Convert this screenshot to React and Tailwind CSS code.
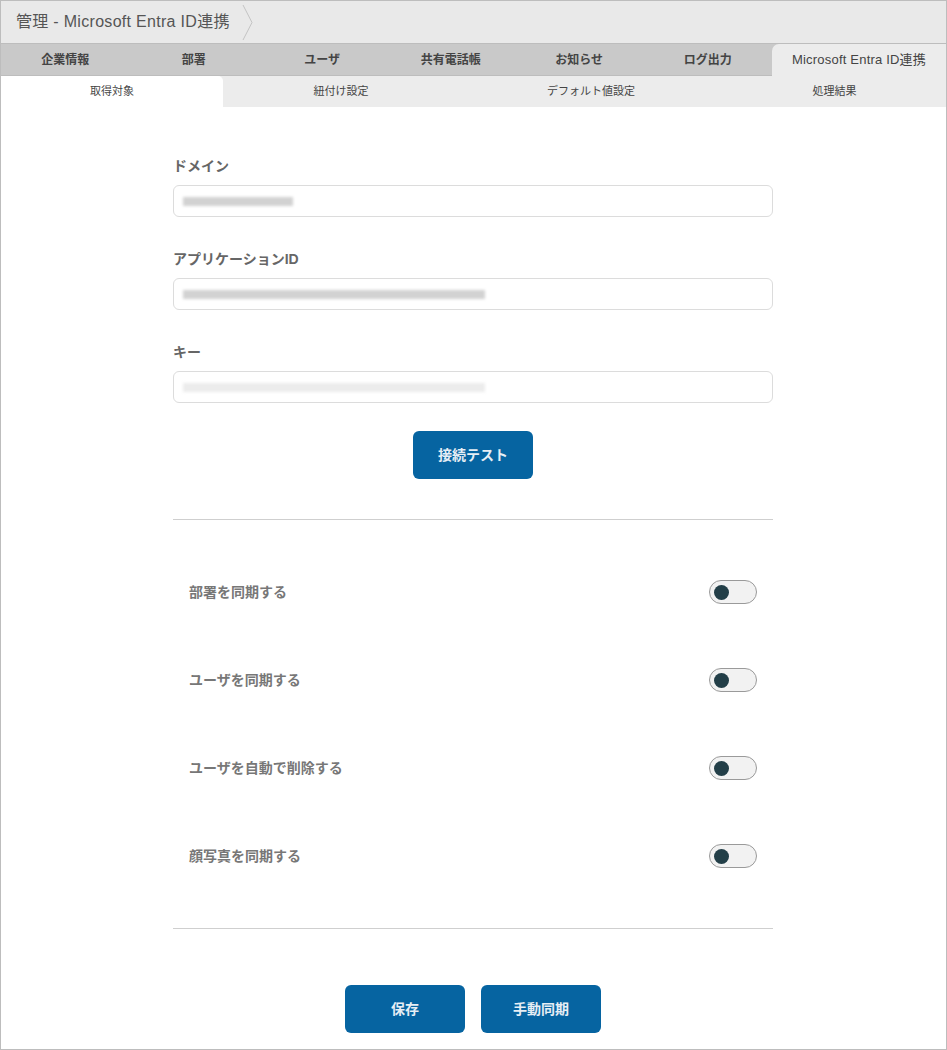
const mainTabs = ["企業情報", "部署", "ユーザ", "共有電話帳", "お知らせ", "ログ出力"];

const subTabs = [
  { label: "取得対象", w: "w-[222px]", active: true },
  { label: "紐付け設定", w: "w-[236px]" },
  { label: "デフォルト値設定", w: "w-[264px]" },
  { label: "処理結果", w: "flex-1" },
];

const toggles = ["部署を同期する", "ユーザを同期する", "ユーザを自動で削除する", "顔写真を同期する"];

function Field({ label, blurWidth, light }) {
  return (
    <div>
      <div className="text-[14px] leading-[20px] font-bold text-[#666]">{label}</div>
      <div className="mt-[9px] flex h-[32px] items-center rounded-[6px] border border-[#dcdcdc] bg-white px-[9px]">
        <div
          className={`h-[9px] blur-[1.5px] ${light ? "bg-[#ececec]" : "bg-[#d2d2d2]"}`}
          style={{ width: blurWidth }}
        />
      </div>
    </div>
  );
}

function Toggle() {
  return (
    <div className="flex h-[24px] w-[48px] items-center rounded-full border border-[#9a9a9a] bg-[#f2f2f2] px-[4px]">
      <div className="h-[15px] w-[15px] rounded-full bg-[#233f48]" />
    </div>
  );
}

export default function App() {
  return (
    <div
      className="h-[1050px] w-[947px] overflow-hidden border border-[#bdbdbd] bg-white"
      style={{ fontFamily: '"Liberation Sans", "Noto Sans CJK JP", sans-serif' }}
    >
      {/* title bar */}
      <div className="flex h-[43px] items-center border-b border-[#bdbdbd] bg-[#e9e9e9]">
        <span className="pl-[15px] text-[16px] tracking-[0.3px] text-[#555]">管理 - Microsoft Entra ID連携</span>
        <svg width="14" height="43" viewBox="0 0 14 43" className="ml-[11px]">
          <path d="M2 4 L11 21.5 L2 39" fill="none" stroke="#c4c4c4" strokeWidth="1" />
        </svg>
      </div>

      {/* main tabs */}
      <div className="flex h-[32px] border-b border-[#bdbdbd] bg-[#c9c9c9]">
        {mainTabs.map((t, i) => (
          <div
            key={t}
            className={`flex w-[128.5px] items-center justify-center text-[12px] font-bold text-[#444] ${
              i === mainTabs.length - 1 ? "rounded-tr-[7px]" : ""
            }`}
          >
            {t}
          </div>
        ))}
        <div className="-mb-px flex flex-1 items-center justify-center rounded-tl-[7px] bg-[#ececec] text-[13px] tracking-[0.2px] text-[#444]">
          Microsoft Entra ID連携
        </div>
      </div>

      {/* sub tabs */}
      <div className="flex h-[31px] bg-[#ececec]">
        {subTabs.map((t) => (
          <div
            key={t.label}
            className={`flex items-center justify-center text-[11px] text-[#444] ${t.w} ${
              t.active ? "rounded-tr-[5px] bg-white" : ""
            }`}
          >
            {t.label}
          </div>
        ))}
      </div>

      {/* content */}
      <div className="ml-[172px] w-[600px] pt-[49px]">
        <div className="flex flex-col gap-[32px]">
          <Field label="ドメイン" blurWidth="110px" />
          <Field label="アプリケーションID" blurWidth="302px" />
          <Field label="キー" blurWidth="302px" light />
        </div>

        <div className="mt-[28px] flex justify-center">
          <button className="h-[48px] w-[120px] rounded-[6px] bg-[#0664a1] text-[14px] font-bold text-[#e6eef5]">
            接続テスト
          </button>
        </div>

        <hr className="mt-[40px] border-[#cfcfcf]" />

        <div className="pt-[28px] pb-[28px]">
          {toggles.map((t) => (
            <div key={t} className="flex h-[88px] items-center justify-between px-[16px]">
              <span className="text-[14px] font-bold text-[#777]">{t}</span>
              <Toggle />
            </div>
          ))}
        </div>

        <hr className="border-[#cfcfcf]" />

        <div className="mt-[56px] flex justify-center gap-[16px]">
          <button className="h-[48px] w-[120px] rounded-[6px] bg-[#0664a1] text-[14px] font-bold text-[#e6eef5]">
            保存
          </button>
          <button className="h-[48px] w-[120px] rounded-[6px] bg-[#0664a1] text-[14px] font-bold text-[#e6eef5]">
            手動同期
          </button>
        </div>
      </div>
    </div>
  );
}
